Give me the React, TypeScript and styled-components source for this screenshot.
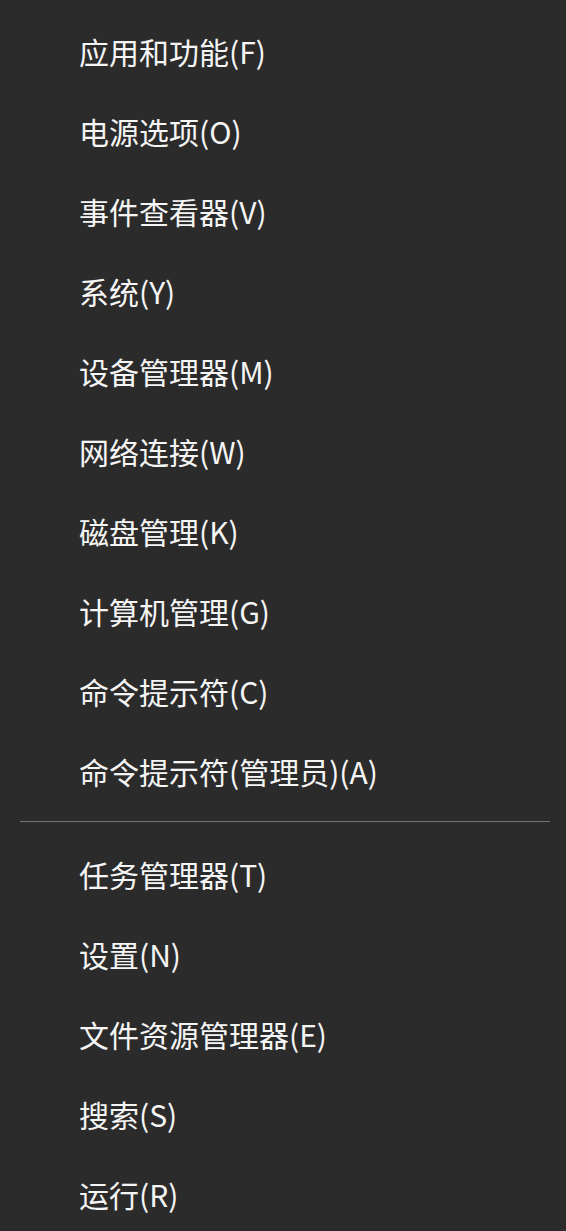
import styled, { createGlobalStyle } from 'styled-components'

const GlobalStyle = createGlobalStyle`
  html, body {
    margin: 0;
    padding: 0;
    background-color: #2b2b2b;
  }
`

const groups: string[][] = [
  [
    '应用和功能(F)',
    '电源选项(O)',
    '事件查看器(V)',
    '系统(Y)',
    '设备管理器(M)',
    '网络连接(W)',
    '磁盘管理(K)',
    '计算机管理(G)',
    '命令提示符(C)',
    '命令提示符(管理员)(A)'
  ],
  [
    '任务管理器(T)',
    '设置(N)',
    '文件资源管理器(E)',
    '搜索(S)',
    '运行(R)'
  ]
]

export default function App () {
  return (
    <>
      <GlobalStyle />
      <Menu>
        {groups.map((items, g) => (
          <Group key={g}>
            {g > 0 && <Separator />}
            {items.map((item) => <MenuItem key={item}>{item}</MenuItem>)}
          </Group>
        ))}
      </Menu>
    </>
  )
}

const Menu = styled.div`
  display: flex;
  flex-direction: column;
  width: 566px;
  min-height: 1231px;
  padding-top: 11px;
  box-sizing: border-box;
  background-color: #2b2b2b;
`

const Group = styled.div`
  display: flex;
  flex-direction: column;
`

const Separator = styled.div`
  height: 1px;
  margin: 10px 16px 12px 20px;
  background-color: #737373;
`

const MenuItem = styled.div`
  display: flex;
  align-items: center;
  height: 80px;
  padding-left: 79px;
  color: #f5f5f5;
  font-family: "Noto Sans CJK SC", "Noto Sans", sans-serif;
  font-size: 30px;
  cursor: default;
`
